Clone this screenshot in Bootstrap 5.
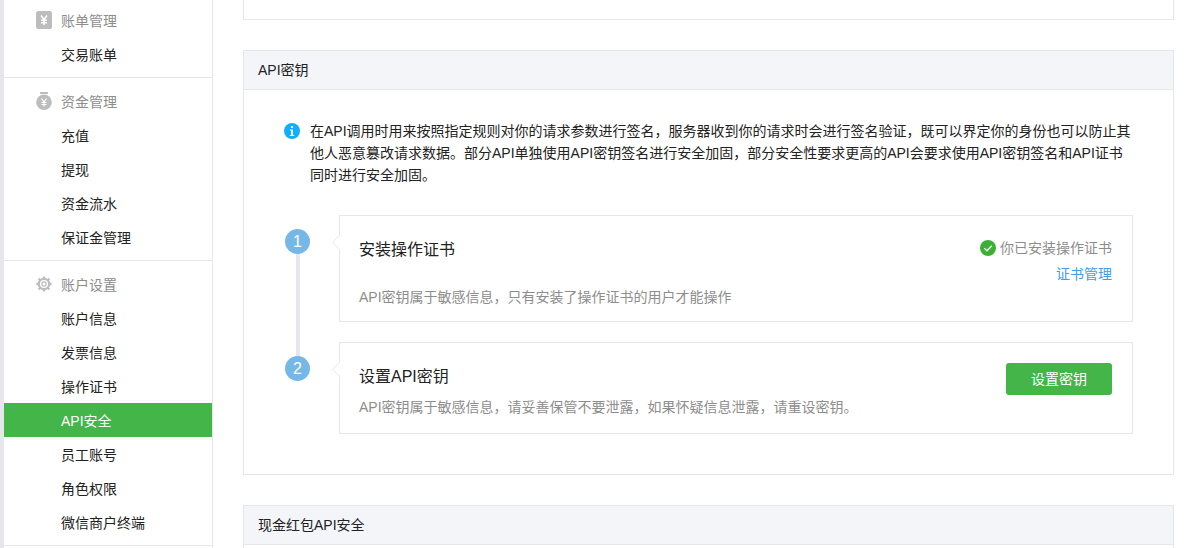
<!DOCTYPE html>
<html lang="zh-CN">
<head>
    <meta charset="UTF-8">
    <meta name="viewport" content="width=device-width, initial-scale=1.0">
    <title>API安全</title>
    <link href="https://cdn.jsdelivr.net/npm/bootstrap@5.3.0/dist/css/bootstrap.min.css" rel="stylesheet">
    <style>
        html, body { height: 100%; overflow: hidden; }
        body { background: #fff; color: #222; font: 14px/22px "Liberation Sans", "Noto Sans CJK SC", sans-serif; }
        .shell { height: 548px; overflow: hidden; }
        .side { width: 209px; margin-left: 4px; flex: none; border-right: 1px solid #e7e7eb; background: #fff; height: 548px; }
        .edge { width: 4px; height: 548px; background: #e7e7eb; position: absolute; left: 0; top: 0; }
        .side-group { padding: 6px 0; border-bottom: 1px solid #e7e7eb; }
        .side-group:first-child { padding-top: 3px; }
        .side-title, .side-item { height: 34px; line-height: 36px; display: block; padding-left: 57px; }
        .side-title { color: #8d8d8d; position: relative; }
        .side-title svg { position: absolute; left: 32px; top: 8px; }
        .side-title svg.gear { top: 9px; }
        .side-item { color: #222; text-decoration: none; }
        .side-item.on { background: #44b549; color: #fff; }
        .main-pane { width: 931px; margin-left: 30px; flex: none; }
        .stub { height: 20px; border: 1px solid #e7e7eb; border-top: 0; margin-bottom: 30px; }
        .panel-box { border: 1px solid #e7e7eb; margin-bottom: 30px; }
        .panel-head { height: 39px; line-height: 38px; padding-left: 14px; background: #f4f5f9; border-bottom: 1px solid #e7e7eb; }
        .panel-inner { padding: 30px 40px 40px; height: 384px; }
        .info-line { position: relative; padding-left: 26px; margin-bottom: 29px; }
        .info-line svg { position: absolute; left: 0; top: 3px; }
        .step-wrap { position: relative; padding-left: 55px; }
        .step-line { position: absolute; left: 12px; top: 30px; height: 125px; width: 4px; background: #e7e7eb; }
        .step-num { position: absolute; left: 1px; width: 25px; height: 25px; border-radius: 50%; background: #75b8e8; color: #fff; text-align: center; line-height: 25px; font-size: 16px; }
        .step-box { position: relative; border: 1px solid #e7e7eb; padding: 22px 20px 0 19px; }
        .step-box::before { content: ""; position: absolute; left: -6px; top: 21px; width: 11px; height: 11px; background: #fff; border-left: 1px solid #eeeeee; border-bottom: 1px solid #eeeeee; transform: rotate(45deg); }
        .step-a { height: 107px; margin-bottom: 20px; }
        .step-b { height: 92px; }
        .step-name { font-size: 16px; line-height: 24px; color: #222; }
        .step-desc { color: #8d8d8d; }
        .desc-b { margin-top: 7px; }
        .step-side { margin-top: -1px; }
        .ok-note { color: #8d8d8d; line-height: 22px; }
        .cert-link { color: #459ae9; text-decoration: none; line-height: 22px; margin-top: 4px; }
        .btn-set { width: 106px; height: 32px; padding: 0; margin-top: -2px; display: block; background: #44b549; border: 0; border-radius: 3px; color: #fff; font-size: 14px; line-height: 32px; }
    </style>
</head>
<body>
    <div class="shell d-flex">
        <div class="edge"></div>
        <nav class="side">
            <div class="side-group">
                <div class="side-title">
                    <svg width="16" height="18" viewBox="0 0 16 18"><rect width="16" height="18" rx="2.5" fill="#bdbdbd"/><path d="M5 4.5 8 8.5 11 4.5M8 8.5V14M5 9.2H11M5 11.7H11" fill="none" stroke="#fff" stroke-width="1.5"/></svg>
                    账单管理
                </div>
                <a class="side-item" href="#">交易账单</a>
            </div>
            <div class="side-group">
                <div class="side-title">
                    <svg width="16" height="18" viewBox="0 0 16 18"><rect x="4" y="0" width="8" height="2" fill="#bdbdbd"/><circle cx="8" cy="10.2" r="7.8" fill="#bdbdbd"/><path d="M5.5 6.5 8 10 10.5 6.5M8 10V14.5M5.5 10.5H10.5M5.5 12.5H10.5" fill="none" stroke="#fff" stroke-width="1.2"/></svg>
                    资金管理
                </div>
                <a class="side-item" href="#">充值</a>
                <a class="side-item" href="#">提现</a>
                <a class="side-item" href="#">资金流水</a>
                <a class="side-item" href="#">保证金管理</a>
            </div>
            <div class="side-group">
                <div class="side-title">
                    <svg class="gear" width="16" height="16" viewBox="0 0 18 18"><circle cx="9" cy="9" r="5.8" fill="none" stroke="#bdbdbd" stroke-width="2.4"/><circle cx="9" cy="9" r="2.4" fill="none" stroke="#bdbdbd" stroke-width="1.4"/><path d="M9 .5V3.5M9 14.5V17.5M.5 9H3.5M14.5 9H17.5M3 3 5 5M13 13 15 15M3 15 5 13M13 5 15 3" stroke="#bdbdbd" stroke-width="2.6"/></svg>
                    账户设置
                </div>
                <a class="side-item" href="#">账户信息</a>
                <a class="side-item" href="#">发票信息</a>
                <a class="side-item" href="#">操作证书</a>
                <a class="side-item on" href="#">API安全</a>
                <a class="side-item" href="#">员工账号</a>
                <a class="side-item" href="#">角色权限</a>
                <a class="side-item" href="#">微信商户终端</a>
            </div>
        </nav>
        <main class="main-pane">
            <div class="stub"></div>
            <section class="panel-box">
                <div class="panel-head">API密钥</div>
                <div class="panel-inner">
                    <div class="info-line">
                        <svg width="16" height="16" viewBox="0 0 16 16"><circle cx="8" cy="8" r="8" fill="#10aeff"/><rect x="7" y="3" width="2" height="2" fill="#fff"/><path d="M6 6.5H9V12H10.2V13H5.8V12H7V7.5H6Z" fill="#fff"/></svg>
                        在API调用时用来按照指定规则对你的请求参数进行签名，服务器收到你的请求时会进行签名验证，既可以界定你的身份也可以防止其他人恶意篡改请求数据。部分API单独使用API密钥签名进行安全加固，部分安全性要求更高的API会要求使用API密钥签名和API证书同时进行安全加固。
                    </div>
                    <div class="step-wrap">
                        <div class="step-line"></div>
                        <div class="step-num" style="top:14px">1</div>
                        <div class="step-num" style="top:141px">2</div>
                        <div class="step-box step-a d-flex justify-content-between">
                            <div>
                                <div class="step-name">安装操作证书</div>
                                <div class="step-desc mt-4">API密钥属于敏感信息，只有安装了操作证书的用户才能操作</div>
                            </div>
                            <div class="step-side d-flex flex-column align-items-end">
                                <div class="ok-note d-flex align-items-center gap-1">
                                    <svg width="16" height="16" viewBox="0 0 16 16"><circle cx="8" cy="8" r="8" fill="#3cb034"/><path d="M4.3 8.2 7 10.8 11.8 5.8" fill="none" stroke="#fff" stroke-width="1.3"/></svg>
                                    你已安装操作证书
                                </div>
                                <a class="cert-link" href="#">证书管理</a>
                            </div>
                        </div>
                        <div class="step-box step-b d-flex justify-content-between">
                            <div>
                                <div class="step-name">设置API密钥</div>
                                <div class="step-desc desc-b">API密钥属于敏感信息，请妥善保管不要泄露，如果怀疑信息泄露，请重设密钥。</div>
                            </div>
                            <div><button class="btn btn-set" type="button">设置密钥</button></div>
                        </div>
                    </div>
                </div>
            </section>
            <section class="panel-box">
                <div class="panel-head">现金红包API安全</div>
                <div class="panel-inner"></div>
            </section>
        </main>
    </div>
    <script src="https://cdn.jsdelivr.net/npm/bootstrap@5.3.0/dist/js/bootstrap.bundle.min.js"></script>
</body>
</html>
